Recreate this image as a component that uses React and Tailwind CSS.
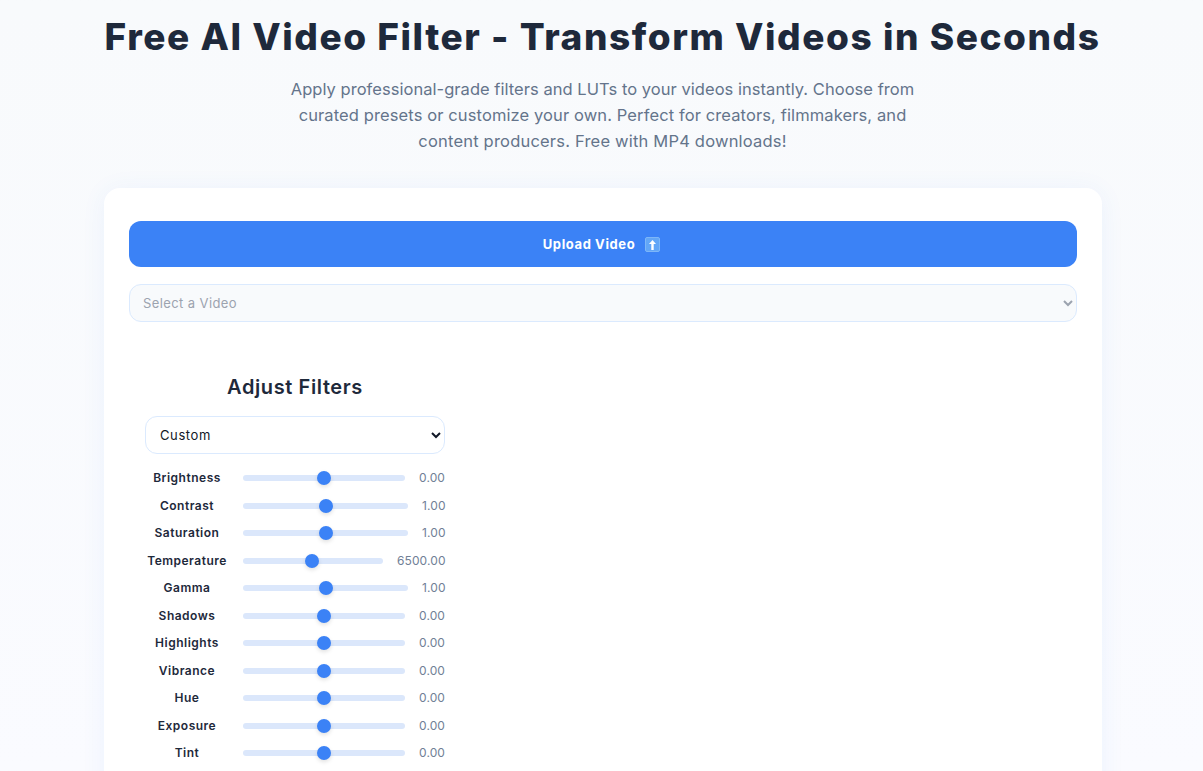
import React from 'react';

const filters = [
  { name: 'Brightness', value: '0.00', min: -1, max: 1, val: 0, valueWidth: 'w-[26px]' },
  { name: 'Contrast', value: '1.00', min: 0, max: 2, val: 1, valueWidth: 'w-[23px]' },
  { name: 'Saturation', value: '1.00', min: 0, max: 2, val: 1, valueWidth: 'w-[23px]' },
  { name: 'Temperature', value: '6500.00', min: 2000, max: 11200, val: 6500, valueWidth: 'w-[48px]' },
  { name: 'Gamma', value: '1.00', min: 0, max: 2, val: 1, valueWidth: 'w-[23px]' },
  { name: 'Shadows', value: '0.00', min: -1, max: 1, val: 0, valueWidth: 'w-[26px]' },
  { name: 'Highlights', value: '0.00', min: -1, max: 1, val: 0, valueWidth: 'w-[26px]' },
  { name: 'Vibrance', value: '0.00', min: -1, max: 1, val: 0, valueWidth: 'w-[26px]' },
  { name: 'Hue', value: '0.00', min: -1, max: 1, val: 0, valueWidth: 'w-[26px]' },
  { name: 'Exposure', value: '0.00', min: -1, max: 1, val: 0, valueWidth: 'w-[26px]' },
  { name: 'Tint', value: '0.00', min: -1, max: 1, val: 0, valueWidth: 'w-[26px]' },
];

const UploadEmoji = () => (
  <svg width="15" height="15" viewBox="0 0 15 15" className="shrink-0">
    <rect x="0.5" y="0.5" width="14" height="14" rx="1.5" fill="#62a6f7" stroke="#7db6f8" />
    <path d="M7.5 3 L11 7 H8.7 V13 H6.3 V7 H4 Z" fill="#ffffff" />
  </svg>
);

const FilterRow = ({ filter }) => (
  <div className="flex h-[27.5px] items-center gap-[14px]">
    <span className="w-[84px] shrink-0 text-center text-[12px] font-semibold tracking-[0.5px] text-[#1e293b]">
      {filter.name}
    </span>
    <input
      type="range"
      min={filter.min}
      max={filter.max}
      step="0.01"
      defaultValue={filter.val}
      className="h-[6px] min-w-0 flex-1 cursor-pointer appearance-none rounded-full bg-[#dbe7fb] [&::-webkit-slider-thumb]:h-[14px] [&::-webkit-slider-thumb]:w-[14px] [&::-webkit-slider-thumb]:appearance-none [&::-webkit-slider-thumb]:rounded-full [&::-webkit-slider-thumb]:bg-[#3b82f6] [&::-webkit-slider-thumb]:shadow-[0_2px_4px_rgba(0,0,0,0.12)]"
    />
    <span className={`${filter.valueWidth} shrink-0 whitespace-nowrap text-right text-[12px] tracking-[0.1px] text-[#718096]`}>
      {filter.value}
    </span>
  </div>
);

export default function App() {
  return (
    <div className="h-[771px] overflow-hidden bg-gradient-to-b from-[#f8fafc] to-[#fafbff] font-['Inter',sans-serif]">
      <h1 className="pt-[14px] pl-[2px] text-center text-[37px] leading-[46px] font-extrabold tracking-[1.56px] text-[#1e293b]">
        Free AI Video Filter - Transform Videos in Seconds
      </h1>
      <p className="mt-[16px] pl-[2px] text-center text-[16.5px] leading-[26px] text-[#64748b]">
        <span className="block tracking-[0.04px]">
          Apply professional-grade filters and LUTs to your videos instantly. Choose from
        </span>
        <span className="block tracking-[0.11px]">
          curated presets or customize your own. Perfect for creators, filmmakers, and
        </span>
        <span className="block tracking-[0.2px]">
          content producers. Free with MP4 downloads!
        </span>
      </p>

      <div className="mt-[34px] ml-[104px] w-[998px] rounded-2xl bg-white px-[25px] pt-[33px] pb-[40px] shadow-[0_2px_24px_rgba(59,130,246,0.07)]">
        <button className="flex h-[46px] w-full items-center justify-center gap-[10px] rounded-xl bg-[#3b82f6] pr-[3px] text-[13px] font-bold tracking-[0.6px] text-white">
          <span className="mt-[2px]">Upload Video</span>
          <UploadEmoji />
        </button>
        <select className="mt-[17px] h-[38px] w-full rounded-xl border border-[#dbeafe] bg-[#f8fafc] pl-[9px] text-[13px] tracking-[0.4px] text-[#9ca3af]">
          <option>Select a Video</option>
        </select>

        <div className="mt-[49px] ml-[16px] w-[300px]">
          <h2 className="text-center text-[20px] leading-[32px] font-semibold tracking-[0.6px] text-[#1e293b]">Adjust Filters</h2>
          <select className="mt-[13px] h-[38px] w-full rounded-xl border border-[#dbeafe] bg-white pl-[10px] text-[13px] tracking-[0.6px] text-[#111827]">
            <option>Custom</option>
          </select>
          <div className="mt-[10.5px]">
            {filters.map((filter) => (
              <FilterRow key={filter.name} filter={filter} />
            ))}
          </div>
        </div>
      </div>
    </div>
  );
}
